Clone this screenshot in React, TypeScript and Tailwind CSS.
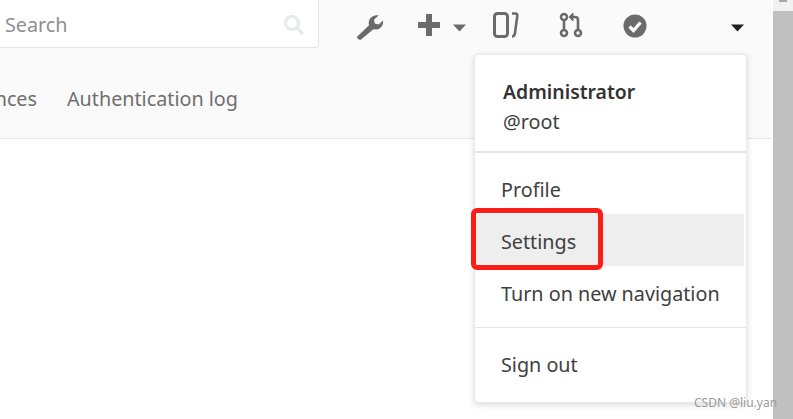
const font = { fontFamily: '"Noto Sans", sans-serif' };

function Caret({ className }: { className: string }) {
  return (
    <svg width="13" height="8" viewBox="0 0 13 8" className={className}>
      <path d="M0 0.5h13L6.5 7.5z" fill="currentColor" />
    </svg>
  );
}

function TopIcons() {
  return (
    <div className="flex items-center text-[#6b6b6b] pl-[37px] h-[48px]">
      {/* wrench */}
      <svg width="28" height="28" viewBox="0 0 28 28" className="mt-[5px]">
        <path
          d="M3 26.5c-1.2-.6-2-1.6-2.2-2.4L13 12.2c-1-3.8.8-7.6 4.4-9.2 1.8-.8 3.6-.8 5.2-.4l-4.6 4.2.8 3.8 3.8 1 4.4-4.2c.6 3-.4 5.8-2.8 7.6-2.2 1.6-4.6 2-6.8 1.2L5.4 26.2c-.6.6-1.6.8-2.4.3z"
          fill="currentColor"
        />
      </svg>
      {/* plus */}
      <svg width="22" height="22" viewBox="0 0 22 22" className="ml-[34px] mt-[1px]">
        <path d="M8 0h6v8h8v6h-8v8H8v-8H0V8h8z" fill="currentColor" />
      </svg>
      <Caret className="ml-[13px] mt-[7px]" />
      {/* board */}
      <svg width="26" height="26" viewBox="0 0 26 26" fill="none" stroke="currentColor" className="ml-[27px] mt-[1px]">
        <rect x="1.5" y="1.5" width="13" height="23" rx="3" strokeWidth="3" />
        <path d="M19 1.5h3.5c1.5 0 2 1 1.8 2.3L22 21c-.3 2-1 3.5-3 3.5" strokeWidth="2.6" />
      </svg>
      {/* merge request */}
      <svg width="24" height="26" viewBox="0 0 24 26" fill="none" stroke="currentColor" strokeWidth="2.6" className="ml-[40px] mt-[1px]">
        <circle cx="5" cy="5" r="3" />
        <circle cx="5" cy="21" r="3" />
        <circle cx="19" cy="21" r="3" />
        <path d="M5 8v10M19 18V8c0-2-1-3-3-3h-3" />
        <path d="M14 1l-4 4 4 4z" fill="currentColor" strokeWidth="1" />
      </svg>
      {/* todo */}
      <svg width="24" height="24" viewBox="0 0 24 24" className="ml-[40px] mt-[3px]">
        <circle cx="12" cy="12" r="11.5" fill="currentColor" />
        <path d="M6.5 12.5l4 4 7-8" fill="none" stroke="#fafafa" strokeWidth="3.4" />
      </svg>
      <Caret className="ml-[84px] mt-[7px] text-[#222]" />
    </div>
  );
}

function UserMenu() {
  return (
    <div className="absolute left-[474px] top-[54px] w-[273px] h-[349px] bg-white rounded-[4px] border border-[#e8e8e8] shadow-[0_2px_6px_rgba(0,0,0,0.14)] text-[#404040] text-[19.75px] leading-[30px]">
      <div className="h-[98px] pl-[28px] pt-[22px] border-b-2 border-[#e5e5e5]">
        <div className="font-semibold text-[19.4px] text-[#333333]">Administrator</div>
        <div>@root</div>
      </div>
      <div className="pt-[9px]">
        <div className="h-[52px] pl-[26px] pt-[3px] flex items-center">Profile</div>
        <div className="h-[52px] pl-[26px] pt-[3px] flex items-center bg-[#eeeeee] mr-[2px]">Settings</div>
        <div className="h-[52px] pl-[26px] pt-[3px] flex items-center">Turn on new navigation</div>
      </div>
      <div className="mt-[9px] border-t border-[#e5e5e5] pt-[11px]">
        <div className="h-[52px] pl-[26px] flex items-center">Sign out</div>
      </div>
    </div>
  );
}

export default function App() {
  return (
    <div className="relative flex w-[793px] h-[419px] overflow-hidden bg-white" style={font}>
      <div className="flex-1 overflow-hidden mr-[2px]">
        <div className="h-[139px] bg-[#fafafa] border-b border-[#e5e5e5]">
          <div className="flex">
            <div className="w-[319px] h-[48px] bg-white border-r border-b border-[#e5e5e5] rounded-br-[3px] flex items-center justify-between pl-[5px] pr-[13px]">
              <span className="text-[19.75px] text-[#8f8f8f] pt-[2px]">Search</span>
              <svg width="22" height="22" viewBox="0 0 22 22" fill="none" stroke="#e8e9ed" strokeWidth="3.2" className="mt-[2px]">
                <circle cx="9" cy="9" r="6.5" />
                <path d="M14 14l6 6" />
              </svg>
            </div>
            <TopIcons />
          </div>
          <div className="flex gap-[30px] text-[19.75px] text-[#6f6f6f] mt-[36px] -ml-[73px]">
            <span>Preferences</span>
            <span>Authentication log</span>
          </div>
        </div>
      </div>
      <div className="w-[20px] bg-[#c0c0c0]">
        <div className="h-[11px] bg-[#f1f1f1] flex justify-center">
          <div className="w-[8px] h-[2px] bg-[#a8a8a8]" />
        </div>
      </div>
      <UserMenu />
      <div className="absolute left-[471px] top-[208px] w-[132px] h-[62px] rounded-[6px] border-[5px] border-[#fb1e16]" />
      <div className="absolute left-[694px] top-[395px] text-[12px] leading-[16px] text-[#9a9a9a]">CSDN @liu.yan</div>
    </div>
  );
}
